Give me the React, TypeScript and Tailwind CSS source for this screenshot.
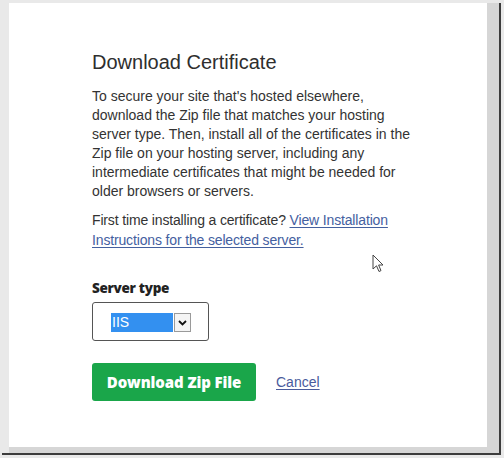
import React from 'react';

function Cursor() {
  return (
    <svg width="13" height="19" viewBox="0 0 13 19" className="absolute left-[363px] top-[251px]">
      <path
        d="M1 1 L1 15 L4.5 11.8 L7 17.5 L9 16.6 L6.6 11 L11 11 Z"
        fill="#fff"
        stroke="#444"
        strokeWidth="1"
        strokeLinejoin="round"
      />
    </svg>
  );
}

function ServerSelect() {
  return (
    <div className="mt-[4px] w-[117px] h-[39px] border border-[#555] rounded-[3px] bg-white pl-[18px] pt-[10px] flex items-start">
      <div className="w-[62px] h-[19px] bg-[#3390f0] text-white text-[14px] leading-[19px] pl-[1px]">IIS</div>
      <div className="ml-[1px] w-[17px] h-[19px] border border-[#9a9a9a] bg-[#f4f4f4] flex items-center justify-center">
        <svg width="9" height="6" viewBox="0 0 9 6">
          <path d="M1 1 L4.5 4.5 L8 1" fill="none" stroke="#111" strokeWidth="1.8" />
        </svg>
      </div>
    </div>
  );
}

export default function App() {
  return (
    <div className="w-[504px] h-[458px] bg-[#e9e9e9] pt-[3px] pl-[2px] font-['Liberation_Sans',Arial,sans-serif]">
      {/* frame shadow: grey band plus dark edge on the right and bottom */}
      <div className="w-[499px] h-[452px] pl-[7px] border-r-[2px] border-b-[2px] border-[#3c3c3c] bg-[linear-gradient(to_right,#e9e9e9_7px,#d6d6d6_7px)]">
        <div className="relative w-[478px] h-[444px] bg-white pl-[83px] pt-[45px] text-[#333]">
          <h1 className="text-[20px] leading-[28px] text-[#2e2e2e]">Download Certificate</h1>

          <p className="mt-[11px] whitespace-nowrap text-[14px] leading-[19px]">
            To secure your site that's hosted elsewhere,
            <br />
            download the Zip file that matches your hosting
            <br />
            server type. Then, install all of the certificates in the
            <br />
            Zip file on your hosting server, including any
            <br />
            intermediate certificates that might be needed for
            <br />
            older browsers or servers.
          </p>

          <p className="mt-[9px] whitespace-nowrap text-[14px] leading-[20px] tracking-[-0.15px]">
            First time installing a certificate?{' '}
            <a className="text-[#44609f] underline underline-offset-2">
              View Installation
              <br />
              Instructions for the selected server.
            </a>
          </p>

          <div className="mt-[28px] font-['Open_Sans',sans-serif] font-extrabold text-[13.5px] leading-[20px] text-[#222] tracking-[-0.3px]">
            Server type
          </div>

          <ServerSelect />

          <div className="mt-[22px] flex items-center">
            <button className="w-[164px] h-[38px] rounded-[3px] bg-[#1aa64a] text-white font-['Open_Sans',sans-serif] font-extrabold text-[15px] tracking-[-0.1px]">
              Download Zip File
            </button>
            <a className="ml-[20px] text-[14px] text-[#4a5b9c] underline underline-offset-2">Cancel</a>
          </div>

          <Cursor />
        </div>
      </div>
    </div>
  );
}
